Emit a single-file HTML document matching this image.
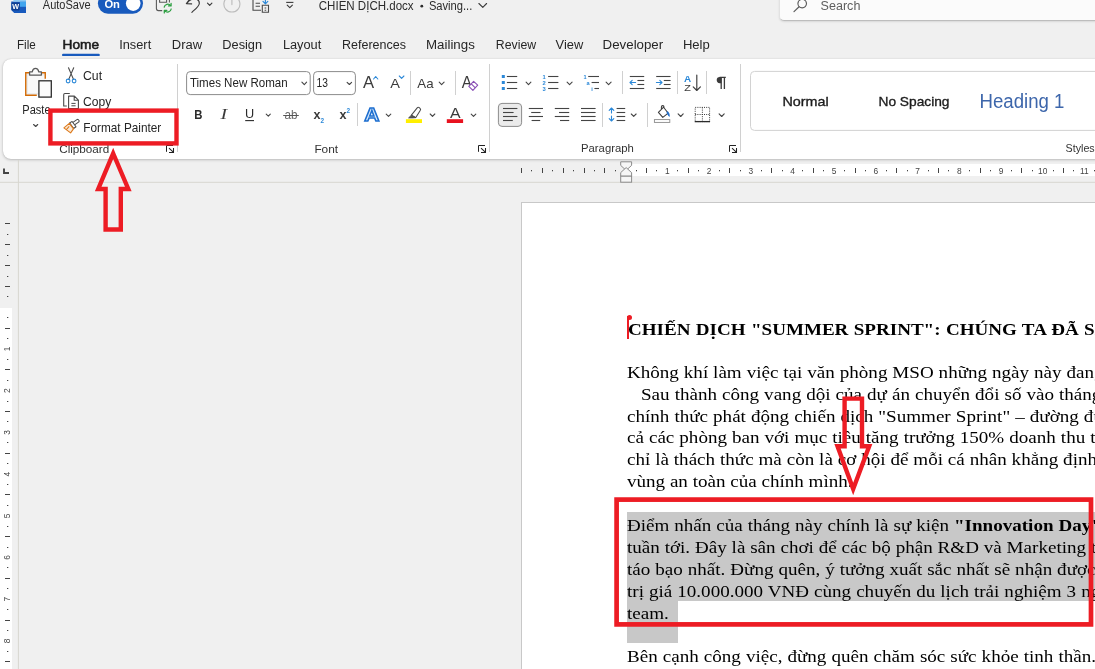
<!DOCTYPE html>
<html lang="vi"><head><meta charset="utf-8"><title>CHIEN DICH.docx - Word</title>
<style>
html,body{margin:0;padding:0}
body{width:1095px;height:669px;overflow:hidden;position:relative;background:#f0f0f0;font-family:"Liberation Sans",sans-serif;color:#242424}
#ribbon{position:absolute;left:3px;top:59px;width:1110px;height:100px;background:#fff;border-radius:8px;box-shadow:0 1px 3px rgba(0,0,0,.22),0 0 1px rgba(0,0,0,.18)}
#search{position:absolute;left:779px;top:-12px;width:330px;height:31px;background:#fbfbfb;border:1px solid #e2e2e2;border-bottom:1px solid #bdbdbd;border-radius:5px;box-shadow:0 1px 2px rgba(0,0,0,.10)}
#page{position:absolute;left:521px;top:202px;width:600px;height:500px;background:#fff;border:1px solid #c8c8c8}
#hruler{position:absolute;left:627px;top:164px;width:480px;height:12px;background:#fff}
#vruler{position:absolute;left:0;top:308px;width:12px;height:400px;background:#fff}
svg{position:absolute;left:0;top:0;will-change:transform}
svg text{font-family:"Liberation Sans",sans-serif}
.ln{position:absolute;white-space:nowrap;font-family:"Liberation Serif",serif;font-size:17.6px;line-height:22px;color:#000;left:627px;transform:scaleX(1.08352);transform-origin:0 0;will-change:transform}
.ln b{font-weight:700}
.hl{position:absolute;background:#c8c8c8}
</style></head>
<body>
<div id="search"></div>
<div id="ribbon"></div>
<div id="hruler"></div>
<div id="vruler"></div>
<div id="page"></div>
<svg width="1095" height="669" viewBox="0 0 1095 669">
<path d="M11.2 1.6 H26 V12.9 H14.2 L11.2 10 Z" fill="#185abd"/><rect x="13.4" y="-2" width="12.6" height="3.6" fill="#8ecbf5"/><rect x="20" y="1.6" width="6" height="5.2" fill="#41a5ee"/><rect x="11.6" y="2.4" width="8" height="8" rx="0.8" fill="#103f91"/><text x="12.2" y="8.9" font-size="7.4" font-weight="700" fill="#fff" textLength="6.8" lengthAdjust="spacingAndGlyphs">W</text>
<text x="42.8" y="8.9" font-size="12.3" fill="#2b2b2b" textLength="47.8" lengthAdjust="spacingAndGlyphs">AutoSave</text>
<rect x="97.9" y="-6.5" width="45.1" height="20.2" rx="10.1" fill="#185abd"/><circle cx="133.2" cy="3.6" r="7.3" fill="#fff"/><text x="104.4" y="8.4" font-size="10.2" font-weight="700" fill="#fff" textLength="15.6" lengthAdjust="spacingAndGlyphs">On</text>
<path d="M156.4 -2 V8.6 a2 2 0 0 0 2 2 H162.2 M159.6 -2 V2.2 H166.6 V-2 M169.4 -2 V2.6" fill="none" stroke="#5a5a5a" stroke-width="1.1"/><path d="M164.2 7.2 a3.6 3.6 0 0 1 6.4 -1.6 M171.1 3.3 V5.9 H168.5 M171.2 9 a3.6 3.6 0 0 1 -6.4 1.6 M164.3 12.9 V10.3 H166.9" fill="none" stroke="#2ea043" stroke-width="1.25" stroke-linecap="round" stroke-linejoin="round"/>
<path d="M189.8 -1 L186.4 3.6 L191.6 3.9 M187 3.2 C192 -3.5 199.5 -1.5 199.3 3.4 C199.2 6 196.5 8 191.9 12.3" fill="none" stroke="#3a3a3a" stroke-width="1.15" stroke-linecap="round" stroke-linejoin="round"/><path d="M207.5 3.2 L209.7 5.4 L211.9 3.2" fill="none" stroke="#3a3a3a" stroke-width="1.15" stroke-linecap="round" stroke-linejoin="round"/>
<path d="M231.9 -2 V4.6 M228.3 -3.1 A8 8 0 1 0 235.5 -3.1" fill="none" stroke="#bcbcbc" stroke-width="1.15" stroke-linecap="round"/>
<path d="M253 -2 V10.2 H261 M255.6 3.3 H260 M255.6 6.3 H260" fill="none" stroke="#4a4a4a" stroke-width="1.1"/><path d="M262.3 5.2 H268.5 V12.3 H262.3 Z M264.6 8 H266.2 M264.6 10.2 H266.2" fill="none" stroke="#4a4a4a" stroke-width="1.1"/><path d="M265.4 -2 V3.6 M263 1.4 L265.4 3.8 L267.8 1.4" fill="none" stroke="#2b88d8" stroke-width="1.15" stroke-linecap="round" stroke-linejoin="round"/>
<path d="M286.2 2.4 H293.4" stroke="#3a3a3a" stroke-width="1.1" fill="none"/><path d="M287.2 5.1 L289.8 7.7 L292.4 5.1" fill="none" stroke="#3a3a3a" stroke-width="1.1" stroke-linecap="round" stroke-linejoin="round"/>
<text x="318.8" y="9.5" font-size="12" fill="#2b2b2b" textLength="94.8" lengthAdjust="spacingAndGlyphs">CHIEN DỊCH.docx</text>
<circle cx="421.8" cy="6.2" r="1.4" fill="#2b2b2b"/><text x="428.9" y="9.5" font-size="12" fill="#2b2b2b" textLength="43.4" lengthAdjust="spacingAndGlyphs">Saving...</text>
<path d="M478.9 3.5 L482.8 7.3 L486.6 3.5" fill="none" stroke="#3a3a3a" stroke-width="1.1" stroke-linecap="round" stroke-linejoin="round"/>
<circle cx="802.2" cy="3.6" r="4.3" fill="none" stroke="#5c5c5c" stroke-width="1.15"/><path d="M799.1 6.8 L794 11.6" stroke="#5c5c5c" stroke-width="1.2" stroke-linecap="round"/><text x="820.6" y="9.7" font-size="12.5" fill="#5f5f5f" textLength="39.8" lengthAdjust="spacingAndGlyphs">Search</text>
<text x="17.0" y="48.6" font-size="12.5" fill="#262626" textLength="18.8" lengthAdjust="spacingAndGlyphs">File</text>
<text x="62.5" y="48.6" font-size="12.5" fill="#1b1b1b" textLength="36.5" lengthAdjust="spacingAndGlyphs" stroke="#1b1b1b" stroke-width="0.55">Home</text>
<text x="119.2" y="48.6" font-size="12.5" fill="#262626" textLength="32.0" lengthAdjust="spacingAndGlyphs">Insert</text>
<text x="171.8" y="48.6" font-size="12.5" fill="#262626" textLength="30.4" lengthAdjust="spacingAndGlyphs">Draw</text>
<text x="222.3" y="48.6" font-size="12.5" fill="#262626" textLength="39.8" lengthAdjust="spacingAndGlyphs">Design</text>
<text x="282.9" y="48.6" font-size="12.5" fill="#262626" textLength="38.4" lengthAdjust="spacingAndGlyphs">Layout</text>
<text x="342.0" y="48.6" font-size="12.5" fill="#262626" textLength="64.0" lengthAdjust="spacingAndGlyphs">References</text>
<text x="426.0" y="48.6" font-size="12.5" fill="#262626" textLength="48.8" lengthAdjust="spacingAndGlyphs">Mailings</text>
<text x="495.8" y="48.6" font-size="12.5" fill="#262626" textLength="40.3" lengthAdjust="spacingAndGlyphs">Review</text>
<text x="555.6" y="48.6" font-size="12.5" fill="#262626" textLength="27.6" lengthAdjust="spacingAndGlyphs">View</text>
<text x="602.6" y="48.6" font-size="12.5" fill="#262626" textLength="60.6" lengthAdjust="spacingAndGlyphs">Developer</text>
<text x="682.9" y="48.6" font-size="12.5" fill="#262626" textLength="26.9" lengthAdjust="spacingAndGlyphs">Help</text>
<rect x="62" y="53.7" width="37.8" height="2.4" rx="1.2" fill="#185abd"/>
<rect x="26.2" y="73.2" width="18.6" height="21.6" fill="#e9ebed"/><rect x="28" y="75.4" width="16.8" height="17.6" fill="#f9f9f9"/><path d="M36.8 95.25 H25.75 V72.75 H45.25 V78.7" fill="none" stroke="#d36b06" stroke-width="1.4"/><path d="M29.6 75 V71.8 H32.2 C32.7 69.2 33.9 68.4 35.5 68.4 C37.1 68.4 38.3 69.2 38.8 71.8 H41.4 V75 Z" fill="#fafafa" stroke="#5a5a5a" stroke-width="1.25" stroke-linejoin="round"/><rect x="38.9" y="80.8" width="12.4" height="16.3" fill="#fbfbfb" stroke="#2e2e2e" stroke-width="1.3"/>
<text x="22.3" y="113.6" font-size="12.5" fill="#242424" textLength="28.3" lengthAdjust="spacingAndGlyphs">Paste</text>
<path d="M33.6 124.5 L35.7 126.5 L37.7 124.5" fill="none" stroke="#444" stroke-width="1.1" stroke-linecap="round" stroke-linejoin="round"/>
<path d="M68.5 67.7 L73.5 79.4 M73.7 67.7 L68.7 79.4" fill="none" stroke="#4a4a4a" stroke-width="1.1" stroke-linecap="round"/><circle cx="68.1" cy="81" r="1.85" fill="none" stroke="#2b88d8" stroke-width="1.1"/><circle cx="74.1" cy="81" r="1.85" fill="none" stroke="#2b88d8" stroke-width="1.1"/>
<text x="83.0" y="80.2" font-size="12.6" fill="#242424" textLength="19.1" lengthAdjust="spacingAndGlyphs">Cut</text>
<path d="M69.8 93.5 H64.9 a1.2 1.2 0 0 0 -1.2 1.2 V106 H66.8" fill="none" stroke="#4a4a4a" stroke-width="1.1"/><path d="M68.6 96.1 H74.4 L78.4 100.1 V108.6 H68.6 Z M74.2 96.3 V100.3 H78.2" fill="none" stroke="#4a4a4a" stroke-width="1.1" stroke-linejoin="round"/><path d="M71.4 103.4 H75.6 M71.4 105.8 H75.6" stroke="#4a4a4a" stroke-width="1" fill="none"/>
<text x="83.0" y="106.1" font-size="12.6" fill="#242424" textLength="28.2" lengthAdjust="spacingAndGlyphs">Copy</text>
<path d="M72.6 122.6 L76.9 119.6 a1.3 1.3 0 0 1 1.8 0.4 l0.2 0.3 a1.3 1.3 0 0 1 -0.4 1.8 L74.6 124.9" fill="#fff" stroke="#4a4a4a" stroke-width="1.05" stroke-linejoin="round"/><path d="M69.6 122.9 L72.1 121.5 L76 126.8 L73.6 128.5 Z" fill="#fff" stroke="#4a4a4a" stroke-width="1.05" stroke-linejoin="round"/><path d="M69.3 123.4 L63.9 127.9 L70.6 132.9 L73.5 128.9 Z M66.4 129.6 L69.2 126.4" fill="#fbe9d5" stroke="#dd7a1c" stroke-width="1.1" stroke-linejoin="round"/>
<text x="83.3" y="131.9" font-size="12.6" fill="#242424" textLength="78.0" lengthAdjust="spacingAndGlyphs">Format Painter</text>
<text x="59.2" y="152.5" font-size="10.7" fill="#333" textLength="50.1" lengthAdjust="spacingAndGlyphs">Clipboard</text>
<path d="M166.5 151.8 V145.5 H173.0" fill="none" stroke="#222" stroke-width="1"/><path d="M169.0 148.2 L173.3 152.2 M173.5 148.0 V152.5 H169.0" fill="none" stroke="#222" stroke-width="1.05"/>
<rect x="177" y="64" width="1" height="88" fill="#d0d0d0"/>
<rect x="186.6" y="71.6" width="123.6" height="23" rx="3.6" fill="#fff" stroke="#8c8c8c" stroke-width="1"/><rect x="313.6" y="71.6" width="41.8" height="23" rx="3.6" fill="#fff" stroke="#8c8c8c" stroke-width="1"/>
<text x="189.9" y="86.8" font-size="12.5" fill="#242424" textLength="97.8" lengthAdjust="spacingAndGlyphs">Times New Roman</text>
<path d="M301.9 82.2 L304.3 84.6 L306.6 82.2" fill="none" stroke="#444" stroke-width="1.1" stroke-linecap="round" stroke-linejoin="round"/>
<text x="316.6" y="86.8" font-size="12.5" fill="#242424" textLength="11.4" lengthAdjust="spacingAndGlyphs">13</text>
<path d="M347.1 82.3 L349.4 84.5 L351.6 82.3" fill="none" stroke="#444" stroke-width="1.1" stroke-linecap="round" stroke-linejoin="round"/>
<text x="362.9" y="88.0" font-size="17.2" fill="#3b3b3b" textLength="11.1" lengthAdjust="spacingAndGlyphs">A</text>
<path d="M373.6 79 L375.7 76.5 L377.8 79" fill="none" stroke="#2b88d8" stroke-width="1.1" stroke-linecap="round" stroke-linejoin="round"/><text x="390.3" y="88.0" font-size="13.4" fill="#3b3b3b" textLength="9.7" lengthAdjust="spacingAndGlyphs">A</text>
<path d="M399.3 76 L401.6 78.4 L403.9 76" fill="none" stroke="#2b88d8" stroke-width="1.1" stroke-linecap="round" stroke-linejoin="round"/>
<rect x="410" y="71" width="1" height="24" fill="#d0d0d0"/>
<text x="417.3" y="88.0" font-size="13.2" fill="#3b3b3b" textLength="16.3" lengthAdjust="spacingAndGlyphs">Aa</text>
<path d="M439.2 82.2 L441.6 84.6 L444.1 82.2" fill="none" stroke="#444" stroke-width="1.1" stroke-linecap="round" stroke-linejoin="round"/>
<rect x="455" y="71" width="1" height="24" fill="#d0d0d0"/>
<text x="461.8" y="87.7" font-size="16.6" fill="#3b3b3b" textLength="10.2" lengthAdjust="spacingAndGlyphs">A</text>
<path d="M468.8 86.4 L473.6 81.4 L477.7 85.2 L472.9 90.3 Z M471.3 83.9 L475.3 87.8" fill="#fff" stroke="#8a4fb5" stroke-width="1.15" stroke-linejoin="round"/>
<text x="194.2" y="118.9" font-size="13.4" font-weight="700" fill="#2b2b2b" textLength="8.2" lengthAdjust="spacingAndGlyphs">B</text>
<text x="220.6" y="118.9" font-size="13.6" font-style="italic" fill="#3a3a3a" style="font-family:'Liberation Serif',serif" textLength="6.6" lengthAdjust="spacingAndGlyphs">I</text><text x="245.0" y="117.9" font-size="12.6" fill="#2b2b2b" textLength="9.2" lengthAdjust="spacingAndGlyphs">U</text>
<path d="M245.2 120.6 H254" stroke="#2b2b2b" stroke-width="1.1" fill="none"/><path d="M266.2 114.2 L268.3 116.2 L270.3 114.2" fill="none" stroke="#444" stroke-width="1.1" stroke-linecap="round" stroke-linejoin="round"/>
<text x="284.6" y="119.2" font-size="12.2" fill="#666" textLength="13.0" lengthAdjust="spacingAndGlyphs">ab</text>
<path d="M283.2 115.5 H298.8" stroke="#555" stroke-width="1" fill="none"/>
<text x="313.4" y="118.9" font-size="13.4" font-weight="700" fill="#3a3a3a" textLength="7.0" lengthAdjust="spacingAndGlyphs">x</text>
<text x="320.4" y="122.6" font-size="6.4" font-weight="700" fill="#2b88d8">2</text><text x="339.4" y="118.9" font-size="13.4" font-weight="700" fill="#3a3a3a" textLength="7.0" lengthAdjust="spacingAndGlyphs">x</text>
<text x="346.6" y="113.2" font-size="6.4" font-weight="700" fill="#2b88d8">2</text>
<rect x="357" y="103" width="1" height="23" fill="#d0d0d0"/>
<text x="364.2" y="121.2" font-size="18.4" font-weight="700" fill="#d6e8fb" stroke="#1e6fd0" stroke-width="1.4" textLength="15.2" lengthAdjust="spacingAndGlyphs">A</text><path d="M386.2 114.1 L388.5 116.3 L390.8 114.1" fill="none" stroke="#444" stroke-width="1.1" stroke-linecap="round" stroke-linejoin="round"/>
<path d="M411.4 115.2 L417.2 107.9 a1.5 1.5 0 0 1 2.1 -0.2 l0.7 0.6 a1.5 1.5 0 0 1 0.2 2.1 L415.8 117.6 Z" fill="#fff" stroke="#4a4a4a" stroke-width="1.05" stroke-linejoin="round"/><path d="M411.4 115.2 L415.8 117.6 L413.2 117.9 L408.6 117.9 Z" fill="#555" stroke="#4a4a4a" stroke-width="0.9" stroke-linejoin="round"/><rect x="405.9" y="119.2" width="16.1" height="3.8" fill="#ffef00"/><path d="M430.2 114.0 L432.5 116.4 L434.8 114.0" fill="none" stroke="#444" stroke-width="1.1" stroke-linecap="round" stroke-linejoin="round"/>
<text x="450.1" y="117.8" font-size="14.6" fill="#3b3b3b" textLength="10.6" lengthAdjust="spacingAndGlyphs">A</text>
<rect x="446.8" y="119.2" width="16.3" height="3.8" fill="#e8121f"/><path d="M471.2 114.1 L473.5 116.3 L475.8 114.1" fill="none" stroke="#444" stroke-width="1.1" stroke-linecap="round" stroke-linejoin="round"/>
<text x="314.4" y="152.5" font-size="10.7" fill="#333" textLength="23.7" lengthAdjust="spacingAndGlyphs">Font</text>
<path d="M478.5 151.8 V145.5 H485.0" fill="none" stroke="#222" stroke-width="1"/><path d="M481.0 148.2 L485.3 152.2 M485.5 148.0 V152.5 H481.0" fill="none" stroke="#222" stroke-width="1.05"/>
<rect x="489" y="64" width="1" height="88" fill="#d0d0d0"/>
<rect x="501.8" y="75.0" width="3" height="3" fill="#2b88d8"/><path d="M506.9 76.5 H517.2" stroke="#444" stroke-width="1.1" fill="none"/><rect x="501.8" y="81.0" width="3" height="3" fill="#2b88d8"/><path d="M506.9 82.5 H517.2" stroke="#444" stroke-width="1.1" fill="none"/><rect x="501.8" y="87.0" width="3" height="3" fill="#2b88d8"/><path d="M506.9 88.5 H517.2" stroke="#444" stroke-width="1.1" fill="none"/>
<path d="M526.1 82.2 L528.5 84.6 L530.9 82.2" fill="none" stroke="#444" stroke-width="1.1" stroke-linecap="round" stroke-linejoin="round"/>
<text x="542.5" y="78.6" font-size="5.8" font-weight="700" fill="#2b88d8">1</text><path d="M548.1 76.5 H558.4" stroke="#444" stroke-width="1.1" fill="none"/><text x="542.5" y="84.6" font-size="5.8" font-weight="700" fill="#2b88d8">2</text><path d="M548.1 82.5 H558.4" stroke="#444" stroke-width="1.1" fill="none"/><text x="542.5" y="90.6" font-size="5.8" font-weight="700" fill="#2b88d8">3</text><path d="M548.1 88.5 H558.4" stroke="#444" stroke-width="1.1" fill="none"/>
<path d="M567.1 82.2 L569.6 84.6 L572.1 82.2" fill="none" stroke="#444" stroke-width="1.1" stroke-linecap="round" stroke-linejoin="round"/>
<text x="583.4" y="78.6" font-size="5.6" font-weight="700" fill="#2b88d8">1</text><path d="M588.2 76.5 H599" stroke="#444" stroke-width="1.1" fill="none"/><text x="586.6" y="84.6" font-size="5.6" font-weight="700" fill="#2b88d8">a</text><path d="M591.6 82.5 H599" stroke="#444" stroke-width="1.1" fill="none"/><text x="591.2" y="90.6" font-size="5.6" font-weight="700" fill="#2b88d8">i</text><path d="M594.4 88.5 H599" stroke="#444" stroke-width="1.1" fill="none"/>
<path d="M606.1 82.2 L608.6 84.6 L611.1 82.2" fill="none" stroke="#444" stroke-width="1.1" stroke-linecap="round" stroke-linejoin="round"/>
<rect x="622" y="71" width="1" height="23" fill="#d0d0d0"/>
<path d="M629.8 76.5 H644.2" stroke="#444" stroke-width="1.1" fill="none"/><path d="M637.4 80.5 H644.2" stroke="#444" stroke-width="1.1" fill="none"/><path d="M637.4 84.5 H644.2" stroke="#444" stroke-width="1.1" fill="none"/><path d="M629.8 88.5 H644.2" stroke="#444" stroke-width="1.1" fill="none"/>
<path d="M630 82.5 H635.6 M632.2 80.3 L630 82.5 L632.2 84.7" fill="none" stroke="#2b88d8" stroke-width="1.1" stroke-linecap="round" stroke-linejoin="round"/><path d="M656.2 76.5 H670.6" stroke="#444" stroke-width="1.1" fill="none"/><path d="M663.8 80.5 H670.6" stroke="#444" stroke-width="1.1" fill="none"/><path d="M663.8 84.5 H670.6" stroke="#444" stroke-width="1.1" fill="none"/><path d="M656.2 88.5 H670.6" stroke="#444" stroke-width="1.1" fill="none"/>
<path d="M656.4 82.5 H662 M659.8 80.3 L662 82.5 L659.8 84.7" fill="none" stroke="#2b88d8" stroke-width="1.1" stroke-linecap="round" stroke-linejoin="round"/>
<rect x="677" y="71" width="1" height="23" fill="#d0d0d0"/>
<text x="684" y="82" font-size="9" font-weight="700" fill="#2b88d8" textLength="7.2" lengthAdjust="spacingAndGlyphs">A</text><text x="684.2" y="91.2" font-size="9" fill="#3b3b3b" textLength="6.6" lengthAdjust="spacingAndGlyphs">Z</text><path d="M696.8 75 V90.4 M693.2 86.9 L696.8 90.5 L700.4 86.9" fill="none" stroke="#3b3b3b" stroke-width="1.15" stroke-linecap="round" stroke-linejoin="round"/>
<rect x="706" y="71" width="1" height="23" fill="#d0d0d0"/>
<path d="M721.2 77.2 V89 M724.4 77.2 V89 M725.8 77.4 H719.6" fill="none" stroke="#3b3b3b" stroke-width="1.3"/><path d="M721.4 77 h-1.6 a3.1 3.1 0 0 0 0 6.2 h1.6 Z" fill="#3b3b3b"/>
<rect x="498.4" y="103.4" width="23.2" height="23" rx="3.6" fill="#ebebeb" stroke="#8c8c8c" stroke-width="1"/><path d="M503.0 108.5 H517.4" stroke="#444" stroke-width="1.1" fill="none"/><path d="M503.0 112.5 H513.6" stroke="#444" stroke-width="1.1" fill="none"/><path d="M503.0 116.5 H517.4" stroke="#444" stroke-width="1.1" fill="none"/><path d="M503.0 120.5 H512.8" stroke="#444" stroke-width="1.1" fill="none"/>
<path d="M528.8 108.5 H543.0" stroke="#444" stroke-width="1.1" fill="none"/><path d="M531.2 112.5 H540.6" stroke="#444" stroke-width="1.1" fill="none"/><path d="M528.8 116.5 H543.0" stroke="#444" stroke-width="1.1" fill="none"/><path d="M531.6 120.5 H540.2" stroke="#444" stroke-width="1.1" fill="none"/>
<path d="M554.8 108.5 H569.2" stroke="#444" stroke-width="1.1" fill="none"/><path d="M559.0 112.5 H569.2" stroke="#444" stroke-width="1.1" fill="none"/><path d="M554.8 116.5 H569.2" stroke="#444" stroke-width="1.1" fill="none"/><path d="M560.0 120.5 H569.2" stroke="#444" stroke-width="1.1" fill="none"/>
<path d="M581.0 108.5 H595.6" stroke="#444" stroke-width="1.1" fill="none"/><path d="M581.0 112.5 H595.6" stroke="#444" stroke-width="1.1" fill="none"/><path d="M581.0 116.5 H595.6" stroke="#444" stroke-width="1.1" fill="none"/><path d="M581.0 120.5 H595.6" stroke="#444" stroke-width="1.1" fill="none"/>
<rect x="602" y="103" width="1" height="24" fill="#d0d0d0"/>
<path d="M611.5 108 V113 M611.5 116 V121 M609.2 110.3 L611.5 108 L613.8 110.3 M609.2 118.7 L611.5 121 L613.8 118.7" fill="none" stroke="#2b88d8" stroke-width="1.1" stroke-linecap="round" stroke-linejoin="round"/><path d="M616.6 108.5 H625.2" stroke="#444" stroke-width="1.1" fill="none"/><path d="M616.6 112.5 H625.2" stroke="#444" stroke-width="1.1" fill="none"/><path d="M616.6 116.5 H625.2" stroke="#444" stroke-width="1.1" fill="none"/><path d="M616.6 120.5 H625.2" stroke="#444" stroke-width="1.1" fill="none"/>
<path d="M631.3 114.0 L633.7 116.4 L636.1 114.0" fill="none" stroke="#444" stroke-width="1.1" stroke-linecap="round" stroke-linejoin="round"/>
<rect x="647" y="103" width="1" height="24" fill="#d0d0d0"/>
<path d="M658.4 112.4 L663.6 107.2 L668.2 113.2 L662.8 117.4 Z M661.4 109.4 V106.9 a1.3 1.3 0 0 1 2.6 0 V107.6" fill="#fff" stroke="#3b3b3b" stroke-width="1.05" stroke-linejoin="round"/><path d="M667.6 111.4 c1.4 1.6 1.9 3.1 1.7 5 c-1.1 -1.2 -1.9 -2.1 -2.3 -4 Z" fill="#1e6fd0" stroke="#1e6fd0" stroke-width="0.7"/><rect x="654.4" y="119.6" width="15.4" height="2.8" fill="#fff" stroke="#8a8a8a" stroke-width="0.9"/><path d="M678.1 113.9 L680.7 116.5 L683.2 113.9" fill="none" stroke="#444" stroke-width="1.1" stroke-linecap="round" stroke-linejoin="round"/>
<rect x="695.2" y="107.4" width="14.4" height="14.2" fill="none" stroke="#3b3b3b" stroke-width="1" stroke-dasharray="1 1.2"/><path d="M702.4 107.4 V121.6 M695.2 114.5 H709.6" fill="none" stroke="#3b3b3b" stroke-width="1" stroke-dasharray="1 1.2"/><path d="M694.7 121.6 H710.1" stroke="#2b2b2b" stroke-width="1.3" fill="none"/>
<path d="M719.1 113.9 L721.7 116.5 L724.2 113.9" fill="none" stroke="#444" stroke-width="1.1" stroke-linecap="round" stroke-linejoin="round"/>
<text x="581.0" y="152.2" font-size="10.7" fill="#333" textLength="52.8" lengthAdjust="spacingAndGlyphs">Paragraph</text>
<path d="M729.5 151.8 V145.5 H736.0" fill="none" stroke="#222" stroke-width="1"/><path d="M732.0 148.2 L736.3 152.2 M736.5 148.0 V152.5 H732.0" fill="none" stroke="#222" stroke-width="1.05"/>
<rect x="740" y="64" width="1" height="88" fill="#d0d0d0"/>
<rect x="750.5" y="71.4" width="360" height="59" rx="4" fill="#fff" stroke="#d2d2d2" stroke-width="1"/>
<text x="782.4" y="105.8" font-size="13.1" fill="#1c1c1c" textLength="46.2" lengthAdjust="spacingAndGlyphs" stroke="#1c1c1c" stroke-width="0.35">Normal</text>
<text x="878.5" y="105.8" font-size="13.1" fill="#1c1c1c" textLength="71.0" lengthAdjust="spacingAndGlyphs" stroke="#1c1c1c" stroke-width="0.35">No Spacing</text>
<text x="979.5" y="107.9" font-size="19.4" fill="#3d66ab" textLength="84.9" lengthAdjust="spacingAndGlyphs">Heading 1</text>
<text x="1065.6" y="152.3" font-size="10.7" fill="#333">Styles</text>
<rect x="0" y="181.8" width="1095" height="1" fill="#d8d6d0"/><rect x="17.9" y="160" width="1" height="520" fill="#d8d6d0"/>
<path d="M4 168.4 V173 H9" fill="none" stroke="#444" stroke-width="1.9"/>
<rect x="521" y="168" width="1" height="5" fill="#454545"/><rect x="531" y="170" width="1" height="1.3" fill="#454545"/><rect x="542" y="168" width="1" height="5" fill="#454545"/><rect x="552" y="170" width="1" height="1.3" fill="#454545"/><rect x="563" y="168" width="1" height="5" fill="#454545"/><rect x="573" y="170" width="1" height="1.3" fill="#454545"/><rect x="584" y="168" width="1" height="5" fill="#454545"/><rect x="594" y="170" width="1" height="1.3" fill="#454545"/><rect x="604" y="168" width="1" height="5" fill="#454545"/><rect x="615" y="170" width="1" height="1.3" fill="#454545"/><rect x="636" y="170" width="1" height="1.3" fill="#454545"/><rect x="646" y="168" width="1" height="5" fill="#454545"/><rect x="656" y="170" width="1" height="1.3" fill="#454545"/><text x="667.4" y="173.6" font-size="8.4" fill="#454545" text-anchor="middle">1</text><rect x="677" y="170" width="1" height="1.3" fill="#454545"/><rect x="688" y="168" width="1" height="5" fill="#454545"/><rect x="698" y="170" width="1" height="1.3" fill="#454545"/><text x="709.1" y="173.6" font-size="8.4" fill="#454545" text-anchor="middle">2</text><rect x="719" y="170" width="1" height="1.3" fill="#454545"/><rect x="729" y="168" width="1" height="5" fill="#454545"/><rect x="740" y="170" width="1" height="1.3" fill="#454545"/><text x="750.8" y="173.6" font-size="8.4" fill="#454545" text-anchor="middle">3</text><rect x="761" y="170" width="1" height="1.3" fill="#454545"/><rect x="771" y="168" width="1" height="5" fill="#454545"/><rect x="782" y="170" width="1" height="1.3" fill="#454545"/><text x="792.5" y="173.6" font-size="8.4" fill="#454545" text-anchor="middle">4</text><rect x="802" y="170" width="1" height="1.3" fill="#454545"/><rect x="813" y="168" width="1" height="5" fill="#454545"/><rect x="823" y="170" width="1" height="1.3" fill="#454545"/><text x="834.2" y="173.6" font-size="8.4" fill="#454545" text-anchor="middle">5</text><rect x="844" y="170" width="1" height="1.3" fill="#454545"/><rect x="855" y="168" width="1" height="5" fill="#454545"/><rect x="865" y="170" width="1" height="1.3" fill="#454545"/><text x="875.9" y="173.6" font-size="8.4" fill="#454545" text-anchor="middle">6</text><rect x="886" y="170" width="1" height="1.3" fill="#454545"/><rect x="896" y="168" width="1" height="5" fill="#454545"/><rect x="907" y="170" width="1" height="1.3" fill="#454545"/><text x="917.6" y="173.6" font-size="8.4" fill="#454545" text-anchor="middle">7</text><rect x="928" y="170" width="1" height="1.3" fill="#454545"/><rect x="938" y="168" width="1" height="5" fill="#454545"/><rect x="948" y="170" width="1" height="1.3" fill="#454545"/><text x="959.3" y="173.6" font-size="8.4" fill="#454545" text-anchor="middle">8</text><rect x="969" y="170" width="1" height="1.3" fill="#454545"/><rect x="980" y="168" width="1" height="5" fill="#454545"/><rect x="990" y="170" width="1" height="1.3" fill="#454545"/><text x="1001.0" y="173.6" font-size="8.4" fill="#454545" text-anchor="middle">9</text><rect x="1011" y="170" width="1" height="1.3" fill="#454545"/><rect x="1021" y="168" width="1" height="5" fill="#454545"/><rect x="1032" y="170" width="1" height="1.3" fill="#454545"/><text x="1042.7" y="173.6" font-size="8.4" fill="#454545" text-anchor="middle">10</text><rect x="1053" y="170" width="1" height="1.3" fill="#454545"/><rect x="1063" y="168" width="1" height="5" fill="#454545"/><rect x="1073" y="170" width="1" height="1.3" fill="#454545"/><text x="1084.4" y="173.6" font-size="8.4" fill="#454545" text-anchor="middle">11</text><rect x="1094" y="170" width="1" height="1.3" fill="#454545"/>
<rect x="5" y="223" width="5" height="1" fill="#454545"/><rect x="7" y="234" width="1.3" height="1" fill="#454545"/><rect x="5" y="244" width="5" height="1" fill="#454545"/><rect x="7" y="255" width="1.3" height="1" fill="#454545"/><rect x="5" y="265" width="5" height="1" fill="#454545"/><rect x="7" y="276" width="1.3" height="1" fill="#454545"/><rect x="5" y="286" width="5" height="1" fill="#454545"/><rect x="7" y="296" width="1.3" height="1" fill="#454545"/><rect x="7" y="317" width="1.3" height="1" fill="#454545"/><rect x="5" y="328" width="5" height="1" fill="#454545"/><rect x="7" y="338" width="1.3" height="1" fill="#454545"/><text x="0" y="0" font-size="8.4" fill="#454545" text-anchor="middle" transform="translate(10.4 349.0) rotate(-90)">1</text><rect x="7" y="359" width="1.3" height="1" fill="#454545"/><rect x="5" y="369" width="5" height="1" fill="#454545"/><rect x="7" y="380" width="1.3" height="1" fill="#454545"/><text x="0" y="0" font-size="8.4" fill="#454545" text-anchor="middle" transform="translate(10.4 390.7) rotate(-90)">2</text><rect x="7" y="401" width="1.3" height="1" fill="#454545"/><rect x="5" y="411" width="5" height="1" fill="#454545"/><rect x="7" y="421" width="1.3" height="1" fill="#454545"/><text x="0" y="0" font-size="8.4" fill="#454545" text-anchor="middle" transform="translate(10.4 432.4) rotate(-90)">3</text><rect x="7" y="442" width="1.3" height="1" fill="#454545"/><rect x="5" y="453" width="5" height="1" fill="#454545"/><rect x="7" y="463" width="1.3" height="1" fill="#454545"/><text x="0" y="0" font-size="8.4" fill="#454545" text-anchor="middle" transform="translate(10.4 474.1) rotate(-90)">4</text><rect x="7" y="484" width="1.3" height="1" fill="#454545"/><rect x="5" y="494" width="5" height="1" fill="#454545"/><rect x="7" y="505" width="1.3" height="1" fill="#454545"/><text x="0" y="0" font-size="8.4" fill="#454545" text-anchor="middle" transform="translate(10.4 515.8) rotate(-90)">5</text><rect x="7" y="526" width="1.3" height="1" fill="#454545"/><rect x="5" y="536" width="5" height="1" fill="#454545"/><rect x="7" y="547" width="1.3" height="1" fill="#454545"/><text x="0" y="0" font-size="8.4" fill="#454545" text-anchor="middle" transform="translate(10.4 557.5) rotate(-90)">6</text><rect x="7" y="567" width="1.3" height="1" fill="#454545"/><rect x="5" y="578" width="5" height="1" fill="#454545"/><rect x="7" y="588" width="1.3" height="1" fill="#454545"/><text x="0" y="0" font-size="8.4" fill="#454545" text-anchor="middle" transform="translate(10.4 599.2) rotate(-90)">7</text><rect x="7" y="609" width="1.3" height="1" fill="#454545"/><rect x="5" y="620" width="5" height="1" fill="#454545"/><rect x="7" y="630" width="1.3" height="1" fill="#454545"/><text x="0" y="0" font-size="8.4" fill="#454545" text-anchor="middle" transform="translate(10.4 640.9) rotate(-90)">8</text><rect x="7" y="651" width="1.3" height="1" fill="#454545"/><rect x="5" y="661" width="5" height="1" fill="#454545"/><rect x="7" y="672" width="1.3" height="1" fill="#454545"/>
<path d="M620.7 161.8 H631.6 V165.4 L626.15 170.4 L620.7 165.4 Z" fill="#f6f6f6" stroke="#8a8a8a" stroke-width="1"/><path d="M620.7 176.2 V172.6 L626.15 167.6 L631.6 172.6 V176.2 Z" fill="#f6f6f6" stroke="#8a8a8a" stroke-width="1"/><rect x="620.7" y="176.2" width="10.9" height="6" fill="#f6f6f6" stroke="#8a8a8a" stroke-width="1"/>
</svg>
<div class="hl" style="left:627px;top:512px;width:480px;height:88.6px"></div>
<div class="hl" style="left:627px;top:600px;width:51.2px;height:43px"></div>
<div class="ln" style="top:318.26px;left:627.8px;word-spacing:0.527px;font-weight:700;">CHIẾN DỊCH "SUMMER SPRINT": CHÚNG TA ĐÃ SẴN SÀNG</div>
<div class="ln" style="top:361.46px;left:627.0px;word-spacing:0.153px;">Không khí làm việc tại văn phòng MSO những ngày này đang</div>
<div class="ln" style="top:383.16px;left:640.8px;word-spacing:0.248px;">Sau thành công vang dội của dự án chuyển đổi số vào tháng</div>
<div class="ln" style="top:404.96px;left:627.0px;word-spacing:0.265px;">chính thức phát động chiến dịch "Summer Sprint" – đường đua</div>
<div class="ln" style="top:426.46px;left:627.0px;word-spacing:0.219px;">cả các phòng ban với mục tiêu tăng trưởng 150% doanh thu trong</div>
<div class="ln" style="top:448.36px;left:627.0px;word-spacing:0.115px;">chỉ là thách thức mà còn là cơ hội để mỗi cá nhân khẳng định</div>
<div class="ln" style="top:469.96px;left:627.0px;">vùng an toàn của chính mình.</div>
<div class="ln" style="top:514.06px;left:627.0px;word-spacing:0.166px;">Điểm nhấn của tháng này chính là sự kiện <b>"Innovation Day"</b></div>
<div class="ln" style="top:536.06px;left:627.0px;word-spacing:0.083px;">tuần tới. Đây là sân chơi để các bộ phận R&amp;D và Marketing trình</div>
<div class="ln" style="top:558.16px;left:627.0px;word-spacing:0.179px;">táo bạo nhất. Đừng quên, ý tưởng xuất sắc nhất sẽ nhận được</div>
<div class="ln" style="top:580.16px;left:627.0px;word-spacing:0.241px;">trị giá 10.000.000 VNĐ cùng chuyến du lịch trải nghiệm 3 ngày</div>
<div class="ln" style="top:602.26px;left:627.0px;">team.</div>
<div class="ln" style="top:644.66px;left:627.0px;word-spacing:0.264px;">Bên cạnh công việc, đừng quên chăm sóc sức khỏe tinh thần.</div>
<div style="position:absolute;left:627px;top:316px;width:1.6px;height:23px;background:#ed1c24"></div>
<div style="position:absolute;left:627.4px;top:314.6px;width:5px;height:5px;border-radius:3px;background:#ed1c24"></div>
<svg width="1095" height="669" viewBox="0 0 1095 669">
<rect x="50.4" y="110.6" width="126.1" height="32.8" fill="none" stroke="#ed1c24" stroke-width="4.4"/>
<path d="M113.2 153.5 L128.3 189 L120.8 189 L120.8 229.5 L105.6 229.5 L105.6 189 L98.2 189 Z" fill="none" stroke="#ed1c24" stroke-width="4.4" stroke-linejoin="miter"/>
<rect x="616.6" y="499.6" width="474.4" height="124.8" fill="none" stroke="#ed1c24" stroke-width="4.7"/>
<path d="M853.2 489 L837.5 446.2 L844.6 446.2 L844.6 398.6 L862 398.6 L862 446.2 L869.2 446.2 Z" fill="none" stroke="#ed1c24" stroke-width="4.4" stroke-linejoin="miter"/>
</svg>

</body></html>
